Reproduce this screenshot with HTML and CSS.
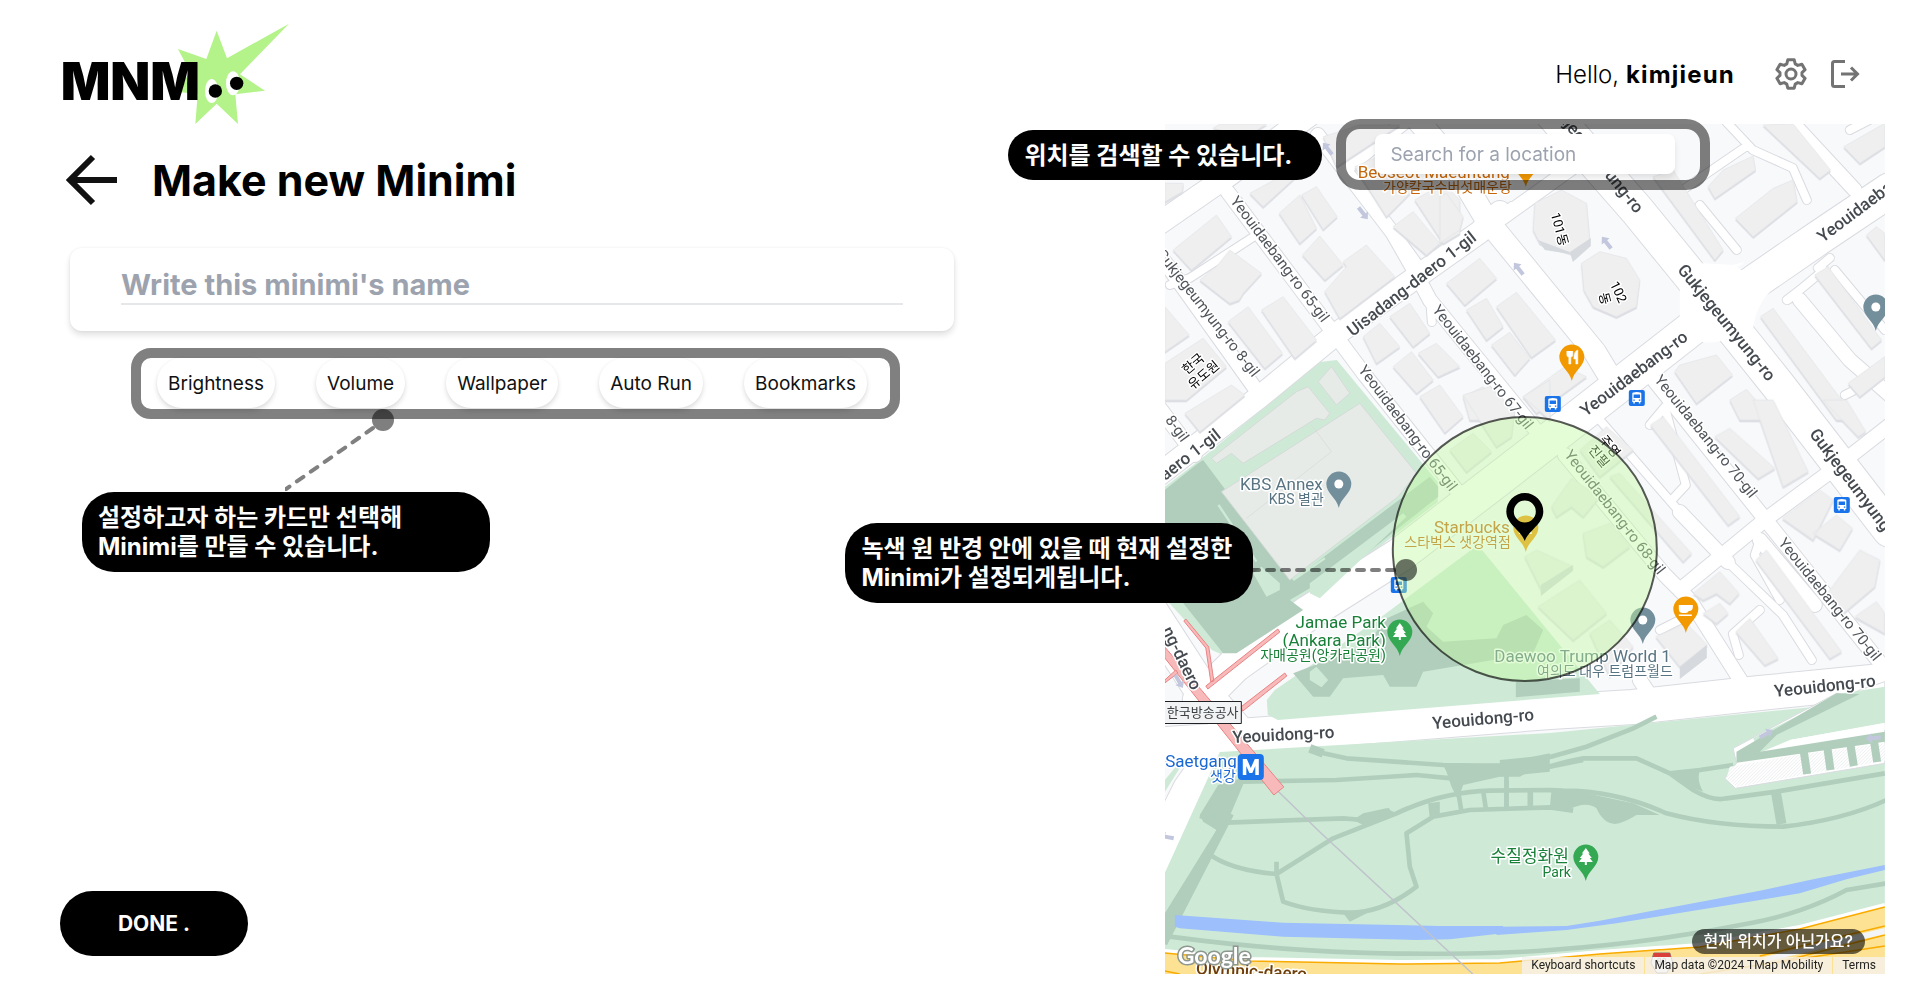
FILE: index.html
```html
<!DOCTYPE html>
<html lang="en">
<head>
<meta charset="utf-8">
<title>Make new Minimi</title>
<meta name="viewport" content="width=device-width, initial-scale=1">
<link rel="stylesheet" href="styles.css">
</head>
<body>
<header class="topbar">
  <a class="logo" href="#" aria-label="MNM home">
    <svg viewBox="0 0 236 100" role="img" aria-label="MNM">
      <g transform="translate(-20 -14) scale(.33333)">
        <path fill="#b4f28a" d="M530 62 561 145 747 41 600 193 675 242 586 253 594 342 530 281 466 342 473 253 395 243 452 190 414 117 499 147Z"/>
        <text class="logo-text" x="62" y="269">MNM</text>
        <ellipse cx="515" cy="243" rx="20" ry="36" fill="#fff"/><ellipse cx="579" cy="220" rx="21" ry="36" fill="#fff"/>
        <circle cx="526" cy="243" r="20"/><circle cx="590" cy="220" r="20"/>
      </g>
    </svg>
  </a>
  <div class="account">
    <p class="hello">Hello, <strong>kimjieun</strong></p>
    <button class="icon-btn" type="button" aria-label="Settings">
      <svg viewBox="0 0 32 32" fill="none" stroke="#737373" stroke-width="3" stroke-linejoin="round"><circle cx="16" cy="16" r="5"/><path d="M12.8 1.8h6.4l1 4.1 2.6 1.5 4.1-1.2 3.2 5.5-3.1 2.9v2.8l3.1 2.9-3.2 5.5-4.1-1.2-2.6 1.5-1 4.1h-6.4l-1-4.1-2.6-1.5-4.1 1.2-3.2-5.5 3.1-2.9v-2.8l-3.1-2.9 3.2-5.5 4.1 1.2 2.6-1.5Z"/></svg>
    </button>
    <button class="icon-btn" type="button" aria-label="Log out">
      <svg viewBox="0 0 32 32" fill="none" stroke="#737373" stroke-width="3"><path d="M16 3.500H5.500Q3.500 3.500 3.500 5.500V26.500Q3.500 28.500 5.500 28.500H16M12 16H29M22 9.500 28.500 16 22 22.500"/></svg>
    </button>
  </div>
</header>

<main class="content">
  <section class="editor">
    <div class="title-row">
      <a class="back" href="#" aria-label="Back">
        <svg viewBox="0 0 52 52" fill="none" stroke="#111" stroke-width="6"><path d="M51 26H5M27 3 4 26 27 49"/></svg>
      </a>
      <h1>Make new Minimi</h1>
    </div>
    <div class="name-card">
      <input class="name-input" type="text" aria-label="Minimi name" placeholder="Write this minimi's name">
    </div>
    <div class="chips">
      <button class="chip" type="button">Brightness</button>
      <button class="chip" type="button">Volume</button>
      <button class="chip" type="button">Wallpaper</button>
      <button class="chip" type="button">Auto Run</button>
      <button class="chip" type="button">Bookmarks</button>
      <svg class="link-cards" viewBox="0 0 110 85" fill="none"><circle cx="98" cy="12" r="11" fill="#000" fill-opacity=".5"/><path d="M88 20 1 81" stroke="#808080" stroke-width="4" stroke-linecap="round" stroke-dasharray="8 9"/></svg>
      <p class="callout callout-cards" lang="ko">설정하고자 하는 카드만 선택해<br>Minimi를 만들 수 있습니다.</p>
    </div>
    <button class="done" type="button">DONE .</button>
  </section>

  <section class="map" aria-label="Map">
    <svg class="scene" viewBox="1165 124 720 850" preserveAspectRatio="xMidYMid slice">
      <defs>
        <path id="pin" d="M0 24C-2 14-12.500 9-12.500 0A12.500 12.500 0 1 1 12.500 0C12.500 9 2 14 0 24Z"/>
        <path id="tree" d="M0-8 4-2.500H2.500L6 2H4L7 6H1V9H-1V6H-7L-4 2H-6L-2.500-2.500H-4Z" fill="#fff"/>
        <path id="arrow" d="M0-8 5-2H2V7H-2V-2H-5Z" fill="#c2c7de"/>
        <g id="bus"><rect x="-8" y="-8" width="16" height="16" rx="2" fill="#1a73e8"/><path fill="#fff" d="M-4.500-4.500Q-4.500-6 0-6T4.500-4.500V4H3.500V5.500H2V4H-2V5.500H-3.500V4H-4.500Z"/><path fill="#1a73e8" d="M-3.200-3.500H3.200V0H-3.200ZM-3.500 1.500H-2V2.800H-3.500ZM2 1.500H3.500V2.800H2Z"/></g>
        <pattern id="hatch" width="7" height="7" patternUnits="userSpaceOnUse" patternTransform="rotate(45)"><rect width="7" height="7" fill="#fff"/><path d="M0 0V7" stroke="#d5d8dc" stroke-width="2"/></pattern>
        <g id="roads" fill="none" stroke-linecap="round" stroke-linejoin="round">
          <path class="w8" d="M1170 285 1190 278 1255 236M1393 233 1400 238 1418 263M1720 115 1753 150 1793 168 1807 200M1680 192 1747 146M1700 205 1737 250M1510 210 1512 207M1500 215 1512 206M1850 130 1885 112M1818 268 1830 258M1787 300 1800 290M1788 300 1824 270M1650 425 1665 407 1686 485 1672 500M1600 420 1680 512M1728 562 1783 615 1812 660M1760 540 1755 555 1780 600M1739 655 1733 634 1760 610M1660 630 1680 620M1430 295 1432 322M1835 270 1885 330M1885 375 1845 395"/>
          <path class="w14" d="M1228 192 1333 332 1365 375 1463 498M1165 262 1260 395M1150 395 1195 455M1318 135 1393 233 1413 268 1430 300 1540 435M1650 375 1890 675M1790 120 1855 190M1680 512 1728 562M1565 455 1665 575 1690 600 1750 695M1680 590 1765 520 1830 472 1890 425M1800 300 1850 360 1890 395M1350 165 1420 110M1502 218 1590 155M1560 440 1460 520M1760 540 1815 605M1640 680 1660 710"/>
          <path class="w22" d="M1160 223 1225 178 1330 100M1160 474 1262 395 1335 335 1480 232 1500 212M1405 105 1450 158 1487 220 1595 352 1615 385"/>
          <path class="w34" d="M1545 105 1637 210 1690 275 1778 385 1890 530M1890 190 1820 237 1740 292 1690 330 1585 412 1500 478 1400 555 1310 612 1235 665 1200 700M1225 737 1400 724 1550 712 1633 707 1760 693 1890 680M1225 740 1190 790 1150 870M1150 610 1205 695 1240 735M1150 745 1230 740"/>
        </g>
      </defs>
      <rect x="1165" y="124" width="720" height="850" fill="#f8f9fb"/>

      <!-- parks -->
      <g fill="#ceead6">
        <path d="M1165 487 1200 460 1320 362 1337 360 1438 482V502L1245 650 1230 658 1212 650 1165 598Z"/>
      </g>
      <g class="r-case"><use href="#roads"/></g>
      <g class="r-fill"><use href="#roads"/></g>
      <path d="M1690 275Q1730 275 1745 262M1680 262V320Q1690 350 1725 340L1765 365 1752 345Q1752 310 1770 292L1735 265Z" fill="#fff"/>
      <path d="M1267 700 1268 715 1278 720 1600 694 1497 568 1478 545 1380 618 1275 690Z" fill="#ceead6"/>
      <path d="M1220 752 1550 733 1885 700V974H1165V873Z" fill="#ceead6"/>
      <path d="M1165 780 1180 762V768L1165 792Z" fill="#ceead6"/>

      <g transform="translate(1150 380) scale(.33333)">
        <path fill="#b1cebd" d="M45 330 145 250 160 240 430 600 840 290 865 320V350L500 640 480 625 420 660 460 690 260 820H220L45 600Z"/>
        <path fill="#ceead6" d="M310 580 335 560 390 610V630L350 650ZM480 610 760 400 770 410 510 655 480 640Z"/>
        <path stroke="#ceead6" stroke-width="7" d="M206 375 320 545M430 600 525 535"/>
        <path fill="#e6ebe8" stroke="#d5dad8" stroke-width="3" d="M215 335 630 70 800 280 745 350 420 600ZM185 235 440 35 475 20 540 100 525 120 500 115 280 250 245 220 200 250ZM505 5 545-40 600 40 560 75Z"/>
        <path fill="none" stroke="#d5dad8" stroke-width="2" d="M485 135 545 215 290 415"/>
      </g>

      <!-- buildings -->
      <g class="bld">
        <path transform="translate(1000 100) scale(.33333)" d="M495 250H550L548 275 495 305ZM750 280 860 220H900L790 320ZM520 450 650 345 695 410 575 510ZM600 540 650 500 690 450 785 520 730 580 718 600 690 610ZM838 340 900 285 950 385 900 430ZM905 285 950 260 1012 350 970 388ZM908 465 960 408 1030 495 975 540ZM975 575 1040 500 1030 485 1100 435 1185 530 1020 655ZM685 665 745 620 848 760 795 805ZM785 630 850 590 950 720 885 775ZM495 620 568 705 495 755ZM495 790 610 715 680 800 560 900H495ZM970 110 1080 75H1200L1010 200ZM1065 200 1180 150 1250 260 1160 350ZM1180 380 1240 335 1320 430 1280 465ZM1245 300 1330 250 1380 300V400L1330 430ZM1090 710 1140 670 1200 740 1130 790ZM1170 650 1230 610 1290 700 1240 740ZM1180 800 1235 755 1300 840 1250 880ZM1255 760 1310 730 1380 800 1315 830ZM640 85 660 72H800L740 110Z"/>
        <path transform="translate(1440 120) scale(.33333)" d="M20 490 120 415 170 475 75 555ZM80 570 140 535 190 620 140 660ZM170 560 230 517 347 660 275 712ZM155 675 210 637 270 715 225 765ZM285 250 365 210 440 250 450 360 395 400 300 370 280 330ZM425 430 480 395 560 415 600 480 590 560 530 590 460 560 432 510ZM640 170 700 150 850 390 825 420ZM970 15 1060 12 1172 150 1140 175ZM805 200 850 150 940 108 947 150 825 235ZM887 295 1000 205 1060 180 1072 245 940 350ZM1212 80 1335 10V80L1260 130ZM1125 465 1165 440 1325 660 1295 685ZM962 590 1000 565 1250 900H1190ZM705 755 720 735 830 705 878 765 770 850ZM870 840 920 808 1000 900H900ZM1280 345 1310 320 1335 340V420ZM250 830 375 740 440 770 290 880ZM1225 790 1335 710V770L1260 830ZM70 830 130 800 200 900H90ZM0 230 20 220 70 290 60 330 0 370Z"/>
        <path transform="translate(1150 380) scale(.33333)" d="M105 100 245 15 285 45 150 155ZM810 50 870 15 940 110 885 158ZM940 45 1020 20 1095 90 1085 170 1040 200ZM1120 50 1200 0V120ZM900 210 970 160 1025 215 950 275Z"/>
        <path transform="translate(1500 400) scale(.33333)" d="M155 320 215 235 300 290 250 350 215 320 170 350ZM250 400 330 370 390 440 310 500 260 470ZM240 150 320 80 400 150 300 230ZM452 75 490 50 720 350 685 375ZM330 230 360 220 575 460 550 485ZM645 110 690 85 825 205 775 235ZM760 0H820L925 215 850 260ZM970 0H1040L1098 95 1075 110ZM848 355 960 270 1000 300 940 420ZM940 400 1010 345 1058 385 1020 450ZM975 590 1080 450 1140 480 1125 560 1030 640ZM1065 650 1130 605 1155 640V700ZM768 480 800 450 1025 755 990 775ZM580 580 660 515 718 580 690 610 650 580 610 600ZM610 640 660 610 685 640 650 670ZM708 695 750 655 835 775 795 795ZM468 710 560 670 622 735 540 800ZM115 620 240 540 320 640 220 720ZM75 470 110 450 220 500 125 570ZM270 700 330 660 400 740 330 830Z"/>
      </g>
      <path fill="#d6d9de" d="M1680 667 1707 645V658L1680 679ZM1541 585 1573 565V571L1541 596ZM1570 252 1591 238V246L1573 262ZM1538 240 1570 252V254L1545 250Z"/>

      <!-- park paths and water -->
      <g transform="translate(1150 600) scale(.33333)">
        <path fill="#b1cebd" d="M430 220 560 170 660 130 700 60 820 5 850 40 830 80 880 125 1040 115 1060 75 1130 45 1180 90 1150 160 820 215 800 260H720L700 225 580 235 540 290H490ZM1098 245 1290 235V275L1098 292Z"/>
        <path fill="#ceead6" d="M480 215 500 200 535 240 515 262 480 240Z"/>
        <path fill="#b1cebd" d="M205 555 290 530 235 660 60 1010H45V940L200 690 160 665 150 645Z"/>
        <g fill="none" stroke="#b1cebd" stroke-width="14" stroke-linejoin="round">
          <path stroke-width="26" d="M40 1030 240 640M480 445 520 460"/>
          <path d="M280 545 560 540 800 525 905 535M230 668 580 655 640 660 720 630M175 760Q240 810 380 822L550 715 740 640Q880 575 1020 572L1200 570 1240 572Q1400 572 1550 640 1700 680 1900 680 2080 660 2210 600M380 785V822L400 905Q480 935 600 938 700 938 800 860L780 800 770 700 850 650 960 630 1200 622 1270 632M500 455 590 475 880 495 1200 500 1300 480M1070 540V630M150 648 230 668M60 1010Q400 1055 700 1060 1000 1065 1200 1050 1500 1030 1800 970 1960 940 2090 870L2210 850"/>
          <path d="M925 575 935 635M1000 572 1008 625M1140 572V622"/>
        </g>
        <path fill="#b1cebd" d="M880 495 1050 490 1200 460 1200 515 1050 530 940 555 925 600 905 560 890 515ZM640 640 710 625 740 640 640 675 610 660ZM580 940 660 935 600 965ZM835 610 870 605 870 650 840 655Z"/>
      </g>
      <g transform="translate(1500 680) scale(.33333)">
        <path fill="none" stroke="#b1cebd" stroke-width="14" d="M0 260 100 245 260 200 400 145 470 110M0 280 110 270 200 245 250 235 410 235 510 280 600 270 700 255M510 280 580 330Q640 365 680 355L830 335 1155 280"/>
        <path stroke="#b1cebd" stroke-width="30" d="M828 335 845 432"/>
        <path fill="#b1cebd" d="M0 240 100 230 105 265 60 290H0ZM510 280 600 272Q590 300 610 335L540 310ZM155 330 260 340 400 370 480 405 410 405Q370 430 345 432 310 430 290 385 260 360 200 392L150 385Z"/>
        <path fill="none" stroke="#b1cebd" stroke-width="14" d="M20 285V385M93 330V385"/>
        <path fill="#fff" stroke="#d9dbe0" stroke-width="3" d="M700 205 1010 40 1050 45 1080 30 1155 5V250L707 325 675 295 710 250Z"/>
        <path fill="#ceead6" d="M760 175 1030 40 1155 20V128L870 180 780 218Z"/>
        <path fill="#b1cebd" d="M710 215 1010 40 1080 42 830 165 780 215 1155 155V185L710 248Z"/>
        <path fill="#fff" d="M870 180 1155 130V150L870 198Z"/>
        <path fill="url(#hatch)" d="M690 260 890 225 1155 190V242L710 320 680 295Z"/>
        <path stroke="#b1cebd" stroke-width="24" d="M912 215 922 282M983 205 992 270M1052 195 1062 258M1122 180 1132 246"/>
      </g>
      <g fill="#9dbffb">
        <path transform="translate(1150 600) scale(.33333)" d="M75 945 400 968 870 978H1060V1000L900 1018 800 1020 400 1010 90 985 75 980Z"/>
        <path transform="translate(1500 680) scale(.33333)" d="M-10 740 200 738 300 722 780 632 940 598 1155 555V570L1040 598 900 640 780 660 350 730 200 750-10 765Z"/>
      </g>

      <!-- expressway -->
      <path d="M1165 953 1250 961 1400 964 1500 963 1600 954 1700 947 1800 929 1885 907V974H1165Z" fill="#fde293"/>
      <path d="M1165 953 1250 961 1400 964 1500 963 1600 954 1700 947 1800 929 1885 907" fill="none" stroke="#fff" stroke-width="4" transform="translate(0 -2)"/>
      <path d="M1165 953 1250 961 1400 964 1500 963 1600 954 1700 947 1800 929 1885 907M1165 971 1180 974M1760 956 1885 926M1780 962 1885 935M1700 974 1885 946" fill="none" stroke="#f9ab00" stroke-width="1.500"/>
      <path d="M1765 957 1885 928V934L1765 962Z" fill="#f3f4f6"/>
      <path d="M1277 790 1320 832 1473 974" stroke="#bfc3cb" fill="none" stroke-width="1.500"/>

      <!-- subway -->
      <g fill="#f7b9b9" stroke="#e98383" stroke-width="1">
        <path d="M1165 647 1284 787 1274 795 1165 658Z"/>
        <path d="M1184 621 1186 619 1209 647 1214 681 1211 682 1206 648ZM1206 686 1278 629 1280 632 1208 689ZM1241 707 1285 673 1287 676 1243 711ZM1165 680 1176 670 1178 673 1165 683Z"/>
      </g>

      <g>
        <use href="#arrow" transform="translate(1328 149) rotate(-38)"/><use href="#arrow" transform="translate(1363 213) rotate(142)"/>
        <use href="#arrow" transform="translate(1519 269) rotate(-38)"/><use href="#arrow" transform="translate(1607 243) rotate(-38)"/>
        <use href="#arrow" transform="translate(1179 681) rotate(150)"/><use href="#arrow" transform="translate(1766 734) rotate(60)"/><use href="#arrow" transform="translate(1874 738) rotate(-96)"/><use href="#arrow" transform="translate(1167 837) rotate(-80)"/>
      </g>

      <!-- road labels -->
      <g class="lbl">
        <text transform="translate(1230 201) rotate(53)">Yeouidaebang-ro 65-gil</text>
        <text transform="translate(1156 254) rotate(52)">Gukjegeumyung-ro 8-gil</text>
        <text transform="translate(1165 420) rotate(54)">8-gil</text>
        <text transform="translate(1358 370) rotate(53)">Yeouidaebang-ro 65-gil</text>
        <text transform="translate(1432 310) rotate(52)">Yeouidaebang-ro 67-gil</text>
        <text transform="translate(1564 455) rotate(52)">Yeouidaebang-ro 68-gil</text>
        <text transform="translate(1654 380) rotate(51)">Yeouidaebang-ro 70-gil</text>
        <text transform="translate(1778 543) rotate(51)">Yeouidaebang-ro 70-gil</text>
      </g>
      <g class="lbl major">
        <text transform="translate(1353 337) rotate(-38)">Uisadang-daero 1-gil</text>
        <text transform="translate(1158 487) rotate(-38)">daero 1-gil</text>
        <text transform="translate(1545 102) rotate(51)">Gukjegeumyung-ro</text>
        <text transform="translate(1677 270) rotate(51)">Gukjegeumyung-ro</text>
        <text transform="translate(1809 434) rotate(53)">Gukjegeumyung-ro</text>
        <text transform="translate(1586 417) rotate(-37)">Yeouidaebang-ro</text>
        <text transform="translate(1823 243) rotate(-37)">Yeouidaebang-ro</text>
        <text transform="translate(1162 630) rotate(64)">ng-daero</text>
        <text transform="translate(1233 743) rotate(-3)">Yeouidong-ro</text>
        <text transform="translate(1433 729) rotate(-5)">Yeouidong-ro</text>
        <text transform="translate(1775 697) rotate(-6)">Yeouidong-ro</text>
        <text class="brown" transform="translate(1196 974) rotate(3)">Olympic-daero</text>
      </g>

      <!-- place labels -->
      <g class="lbl ko black">
        <text transform="translate(1187 375) rotate(-40)">한국</text><text transform="translate(1193 390) rotate(-40)">유도원</text>
        <text transform="translate(1551 214) rotate(75)">101동</text>
        <text transform="translate(1610 284) rotate(65)">102</text><text transform="translate(1599 294) rotate(75)">동</text>
        <text transform="translate(1599 440) rotate(50)">주영</text><text transform="translate(1588 450) rotate(50)">진필</text>
      </g>
      <g class="lbl place" text-anchor="end">
        <g fill="#c5660a"><text x="1510" y="178">Beoseot Maeuntang</text><text class="sub" x="1512" y="192">가양칼국수버섯매운탕</text></g>
        <g fill="#587482"><text x="1323" y="490">KBS Annex</text><text class="sub" x="1324" y="504">KBS 별관</text><text x="1671" y="662">Daewoo Trump World 1</text><text class="sub" x="1673" y="676">여의도 대우 트럼프월드</text></g>
        <g fill="#c5660a"><text x="1510" y="533">Starbucks</text><text class="sub" x="1511" y="547">스타벅스 샛강역점</text></g>
        <g fill="#188038"><text x="1386" y="628">Jamae Park</text><text x="1386" y="646">(Ankara Park)</text><text class="sub" x="1386" y="660">자매공원(앙카라공원)</text><text x="1569" y="862">수질정화원</text><text class="sub" x="1571" y="877">Park</text></g>
        <g fill="#1967d2"><text x="1237" y="767">Saetgang</text><text class="sub" x="1236" y="781">샛강</text></g>
      </g>
      <path d="M1160 701.500H1241.500V723.500H1160" fill="#f1f3f4" stroke="#202124"/>
      <text class="box" x="1167" y="717">한국방송공사</text>

      <!-- pins -->
      <use href="#pin" x="1526" y="163" fill="#f29900"/>
      <use href="#pin" x="1572" y="357" fill="#f29900"/><path d="M1567 351V355Q1567 357 1569 357V364H1571V357Q1573 357 1573 355V351M1570 351V356M1578 350V364H1576V359H1574Q1574 351 1578 350Z" fill="#fff" stroke="#fff" stroke-width=".5"/>
      <use href="#pin" x="1686" y="609" fill="#f29900"/><path d="M1679 605H1693V607Q1693 611 1689 611 1688 613 1686 613H1683Q1679 613 1679 609ZM1679 614.500H1692V616H1679Z" fill="#fff"/>
      <g fill="#748f9c"><use href="#pin" x="1339" y="484"/><use href="#pin" x="1876" y="307"/><use href="#pin" x="1643" y="620"/></g>
      <g fill="#fff"><circle cx="1339" cy="484" r="4.500"/><circle cx="1876" cy="307" r="4.500"/><circle cx="1643" cy="620" r="4.500"/></g>
      <g fill="#34a853"><use href="#pin" x="1400" y="632"/><use href="#pin" x="1586" y="857"/></g>
      <use href="#tree" x="1400" y="631"/><use href="#tree" x="1586" y="856"/>
      <use href="#pin" x="1526" y="528" fill="#f29900"/><path d="M1519 532H1532V534H1519Z" fill="#fff"/>
      <use href="#bus" x="1553" y="404"/><use href="#bus" x="1637" y="398"/><use href="#bus" x="1842" y="505"/><use href="#bus" x="1399" y="585"/>
      <rect x="1238" y="754" width="26" height="26" rx="4" fill="#1a73e8"/><path d="M1243 775V759H1247L1251 768 1255 759H1259V775H1255.500V766L1252.500 773H1249.500L1246.500 766V775Z" fill="#fff"/>
      <path d="M1654 953H1670L1673 963 1667 973H1657L1651 963Z" fill="#fff" stroke="#777"/><path d="M1654 953H1670L1671 957H1653Z" fill="#d9403a"/><text class="shield" x="1662" y="965">88</text>

      <!-- radius -->
      <circle cx="1525" cy="549" r="132" fill="#c0faa0" fill-opacity=".42" stroke="#000" stroke-opacity=".65" stroke-width="2"/>
      <path fill-rule="evenodd" d="M1525 541C1521 530 1506.500 524 1506.500 511.500A18.500 18.500 0 1 1 1543.500 511.500C1543.500 524 1529 530 1525 541ZM1525 500.500A11 11 0 1 0 1525 522.500 11 11 0 1 0 1525 500.500Z"/>
      <text class="google" x="1178" y="964">Google</text>
    </svg>

    <form class="search-frame"><input class="search" type="search" aria-label="Search for a location" placeholder="Search for a location"></form>
    <p class="callout callout-search" lang="ko">위치를 검색할 수 있습니다.</p>
    <svg class="link-radius" viewBox="0 0 168 24" fill="none"><path d="M2 12H147" stroke="#000" stroke-opacity=".5" stroke-width="4" stroke-linecap="round" stroke-dasharray="7 8"/><circle cx="156" cy="12" r="11" fill="#000" fill-opacity=".55"/></svg>
    <p class="callout callout-radius" lang="ko">녹색 원 반경 안에 있을 때 현재 설정한<br>Minimi가 설정되게됩니다.</p>
    <button class="relocate" type="button" lang="ko">현재 위치가 아닌가요?</button>
    <div class="credits"><button type="button">Keyboard shortcuts</button><span>Map data ©2024 TMap Mobility</span><a href="#">Terms</a></div>
  </section>
</main>
</body>
</html>
```
FILE: styles.css
```css
* { box-sizing: border-box; }
body {
  margin: 0;
  min-height: 100vh;
  display: flex;
  flex-direction: column;
  background: #fff;
  color: #000;
  font-family: Inter, "Noto Sans CJK KR", sans-serif;
}
button, input { font: inherit; color: inherit; border: 0; background: none; padding: 0; }
button { cursor: pointer; }
svg { display: block; }
h1, p { margin: 0; }

.topbar { display: flex; justify-content: space-between; height: 124px; padding: 24px 58px 0 60px; }
.logo { color: #000; }
.logo svg { width: 236px; height: 100px; overflow: visible; }
.logo-text { font-size: 156px; font-weight: 900; }
.account { display: flex; align-items: center; height: 100px; }
.hello { font-size: 24px; font-weight: 300; margin-right: 40px; }
.hello strong { font-weight: 700; letter-spacing: .05em; }
.icon-btn { width: 32px; height: 32px; }
.icon-btn + .icon-btn { margin-left: 22px; }

.content { flex: 1; display: flex; padding: 0 34px 10px 60px; }
.editor { flex: 1; display: flex; flex-direction: column; align-items: flex-start; padding: 26px 211px 18px 0; }
.title-row { display: flex; align-items: center; gap: 34px; padding-left: 6px; height: 60px; }
.back svg { width: 52px; height: 52px; }
h1 { font-size: 43px; font-weight: 700; line-height: 60px; }
.name-card {
  align-self: stretch;
  margin: 38px 0 17px 10px;
  padding: 17px 51px 26px;
  border-radius: 12px;
  box-shadow: 0 4px 6px rgba(0, 0, 0, .12), 0 0 3px rgba(0, 0, 0, .06);
}
.name-input { display: block; width: 100%; height: 40px; border-bottom: 2px solid #e5e7eb; font-size: 29px; font-weight: 700; }
.name-input::placeholder, .search::placeholder { color: #9ca3af; opacity: 1; }
.chips {
  position: relative;
  width: 769px;
  margin-left: 71px;
  display: flex;
  justify-content: space-between;
  padding: 0 23px 1px 16px;
  border: 10px solid #808080;
  border-radius: 20px;
}
.chip { height: 50px; padding: 0 11px; border-radius: 25px; font-size: 19px; color: #111; box-shadow: 0 3px 5px rgba(0, 0, 0, .13), 0 0 3px rgba(0, 0, 0, .04); }
.done { margin-top: auto; width: 188px; height: 65px; border-radius: 33px; background: #000; color: #fff; font-size: 21px; font-weight: 700; }

.callout { position: absolute; padding: 11px 16px 10px; border-radius: 32px; background: #000; color: #fff; font-size: 24px; font-weight: 700; line-height: 29px; white-space: nowrap; }
.callout-cards { left: -59px; top: 134px; width: 408px; height: 80px; }
.link-cards { position: absolute; left: 144px; top: 50px; width: 110px; height: 85px; }
.callout-search { left: -157px; top: 6px; width: 314px; height: 50px; border-radius: 25px; }
.callout-radius { left: -320px; top: 399px; width: 408px; height: 80px; }
.link-radius { position: absolute; left: 85px; top: 434px; width: 168px; height: 24px; }

.map { position: relative; flex: none; width: 37.5vw; min-height: 850px; }
.scene { position: absolute; inset: 0; width: 100%; height: 100%; }
.search-frame { position: absolute; left: 171px; top: -5px; padding: 5px 25px 6px 29px; border: 10px solid rgba(0, 0, 0, .5); border-radius: 24px; }
.search { display: block; width: 300px; height: 40px; padding: 0 15px; border-radius: 8px; background: #fff; font-size: 19px; box-shadow: 0 4px 6px rgba(0, 0, 0, .1); }
.relocate { position: absolute; right: 20px; bottom: 20px; height: 25px; padding: 0 12px; border-radius: 13px; background: rgba(0, 0, 0, .6); color: #fff; font-size: 16px; font-weight: 500; line-height: 25px; }
.credits { position: absolute; right: 0; bottom: 0; display: flex; gap: 1px; font: 12px/17px Roboto, sans-serif; color: #222; }
.credits > * { height: 17px; padding: 0 9px; background: rgba(245, 243, 238, .8); color: #222; text-decoration: none; }

.r-case { --edge: 2px; stroke: #d9dbe0; }
.r-fill { --edge: 0px; stroke: #fff; }
.w8 { stroke-width: calc(8px + var(--edge)); }
.w14 { stroke-width: calc(14px + var(--edge)); }
.w22 { stroke-width: calc(22px + var(--edge)); }
.w34 { stroke-width: calc(34px + var(--edge)); }
.bld { fill: #efefef; stroke: #e1e3e6; stroke-width: 2px; filter: drop-shadow(0 2px 0 #dcdee3); }
.lbl { font: 15px Roboto, "Noto Sans CJK KR", sans-serif; fill: #50555b; stroke-width: 3px; stroke-linejoin: round; }
.lbl text { stroke: #fff; paint-order: stroke; }
.major { font-size: 17px; font-weight: 500; fill: #454a50; }
.brown { fill: #703e08; }
.black { fill: #000; font-size: 13px; }
.place { font-size: 17px; }
.sub { font-size: 14px; }
.box { font: 13px "Noto Sans CJK KR", sans-serif; fill: #3c4043; }
.shield { font: 9px Roboto, sans-serif; text-anchor: middle; fill: #777; }
.google { font: 23px Lato, sans-serif; font-weight: 700; fill: #fff; stroke: #8d968f; stroke-width: 3px; paint-order: stroke; }
```
